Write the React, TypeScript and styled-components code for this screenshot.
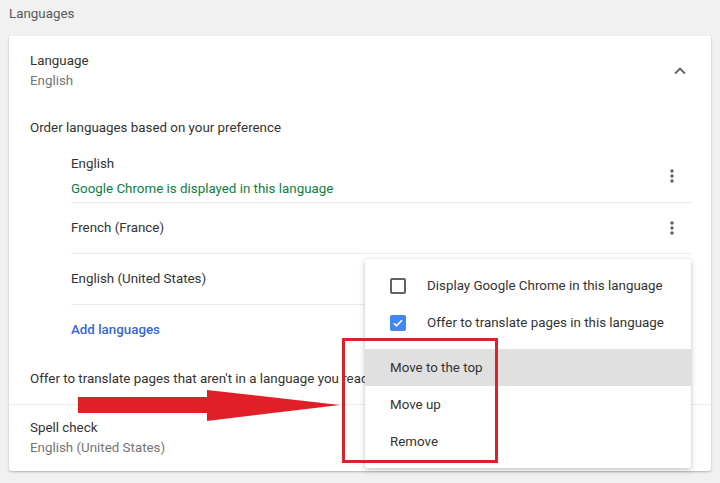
import styled, { createGlobalStyle } from "styled-components";

const TEXT_COLOR = "#333333";
const SECONDARY_TEXT = "#757575";
const SEPARATOR = "#e9e9e9";
const ICON_COLOR = "#616161";
const ANNOTATION_RED = "#e01f26";

const GlobalStyle = createGlobalStyle`
  body {
    margin: 0;
    background: #f1f1f1;
    font-family: Roboto, "Liberation Sans", Arial, sans-serif;
    font-size: 13.35px;
    color: ${TEXT_COLOR};
  }
`;

const languages = [
  { name: "English", note: "Google Chrome is displayed in this language" },
  { name: "French (France)" },
  { name: "English (United States)", menuOpen: true },
];

const ChevronUp = () => (
  <svg width="22" height="22" viewBox="0 0 24 24" fill={ICON_COLOR}>
    <path d="M7.41 15.41L12 10.83l4.59 4.58L18 14l-6-6-6 6z" />
  </svg>
);

const MoreVert = () => (
  <svg width="20" height="20" viewBox="0 0 24 24" fill={ICON_COLOR}>
    <path d="M12 8c1.1 0 2-.9 2-2s-.9-2-2-2-2 .9-2 2 .9 2 2 2zm0 2c-1.1 0-2 .9-2 2s.9 2 2 2 2-.9 2-2-.9-2-2-2zm0 6c-1.1 0-2 .9-2 2s.9 2 2 2 2-.9 2-2-.9-2-2-2z" />
  </svg>
);

const CheckMark = () => (
  <svg width="12" height="12" viewBox="0 0 24 24">
    <path d="M4 12.5l5 5L20 6.5" fill="none" stroke="#fff" strokeWidth="3.4" />
  </svg>
);

const Arrow = () => (
  <ArrowSvg width="264" height="33" viewBox="0 0 264 33">
    <polygon
      points="0,8 129,8 129,1 262,16 129,32 129,24 0,24"
      fill={ANNOTATION_RED}
    />
  </ArrowSvg>
);

export default function App() {
  return (
    <>
      <GlobalStyle />
      <Page>
        <SectionTitle>Languages</SectionTitle>
        <Card>
          <HeaderRow>
            <TwoLine>
              <span>Language</span>
              <Secondary>English</Secondary>
            </TwoLine>
            <IconButton>
              <ChevronUp />
            </IconButton>
          </HeaderRow>

          <SubHeading>Order languages based on your preference</SubHeading>

          <LanguageList>
            {languages.map((lang) => (
              <LanguageItem key={lang.name} $tall={!!lang.note}>
                <TwoLine>
                  <ItemName $tall={!!lang.note}>{lang.name}</ItemName>
                  {lang.note && <Note>{lang.note}</Note>}
                </TwoLine>
                {!lang.menuOpen && (
                  <KebabButton>
                    <MoreVert />
                  </KebabButton>
                )}
              </LanguageItem>
            ))}
            <AddLink>Add languages</AddLink>
          </LanguageList>

          <SettingRow>
            Offer to translate pages that aren't in a language you read
          </SettingRow>

          <SpellRow>
            <TwoLine>
              <span>Spell check</span>
              <Secondary>English (United States)</Secondary>
            </TwoLine>
          </SpellRow>
        </Card>

        <Menu>
          <CheckItem>
            <Checkbox $checked={false} />
            Display Google Chrome in this language
          </CheckItem>
          <CheckItem>
            <Checkbox $checked>
              <CheckMark />
            </Checkbox>
            Offer to translate pages in this language
          </CheckItem>
          <MenuGap />
          <MenuItem $active>Move to the top</MenuItem>
          <MenuItem>Move up</MenuItem>
          <MenuItem>Remove</MenuItem>
        </Menu>

        <Arrow />
        <Highlight />
      </Page>
    </>
  );
}

const Page = styled.div`
  position: relative;
  width: 720px;
  height: 483px;
  padding: 0 9px;
  box-sizing: border-box;
  overflow: hidden;
`;

const SectionTitle = styled.div`
  height: 36px;
  padding-top: 4px;
  box-sizing: border-box;
  line-height: 20px;
  color: #5a5a5a;
`;

const Card = styled.div`
  width: 702px;
  background: #fff;
  border-radius: 2px;
  box-shadow: 0 1px 2px rgba(0, 0, 0, 0.2), 0 1px 3px rgba(0, 0, 0, 0.08);
`;

const TwoLine = styled.div`
  display: flex;
  flex-direction: column;
  line-height: 20px;
`;

const Secondary = styled.span`
  color: ${SECONDARY_TEXT};
`;

const HeaderRow = styled.div`
  height: 68px;
  display: flex;
  align-items: center;
  justify-content: space-between;
  padding: 2px 20px 0 21px;
  box-sizing: border-box;
`;

const IconButton = styled.div`
  width: 22px;
  height: 22px;
  display: flex;
  align-items: center;
  justify-content: center;
`;

const SubHeading = styled.div`
  height: 46px;
  display: flex;
  align-items: center;
  padding-left: 21px;
`;

const LanguageList = styled.div`
  margin: 0 20px 0 62px;
`;

const LanguageItem = styled.div<{ $tall: boolean }>`
  height: ${(p) => (p.$tall ? 52 : 50)}px;
  display: flex;
  align-items: center;
  justify-content: space-between;
  border-bottom: 1px solid ${SEPARATOR};
`;

const ItemName = styled.span<{ $tall: boolean }>`
  line-height: ${(p) => (p.$tall ? 25 : 20)}px;
`;

const Note = styled.span`
  line-height: 25px;
  color: #0b8043;
`;

const KebabButton = styled.div`
  width: 20px;
  height: 20px;
  margin-right: 9px;
  display: flex;
  align-items: center;
  justify-content: center;
`;

const AddLink = styled.div`
  height: 48px;
  display: flex;
  align-items: center;
  color: #3367d6;
  font-weight: 500;
`;

const SettingRow = styled.div`
  height: 51px;
  display: flex;
  align-items: center;
  padding-left: 21px;
  border-bottom: 1px solid ${SEPARATOR};
`;

const SpellRow = styled.div`
  height: 66px;
  display: flex;
  align-items: center;
  padding-left: 21px;
`;

const Menu = styled.div`
  position: absolute;
  left: 365px;
  top: 259px;
  width: 326px;
  height: 209px;
  padding: 8px 0;
  box-sizing: border-box;
  background: #fff;
  border-radius: 2px;
  box-shadow: 0 2px 6px rgba(0, 0, 0, 0.22), 0 0 2px rgba(0, 0, 0, 0.1);
  display: flex;
  flex-direction: column;
`;

const CheckItem = styled.div`
  height: 37px;
  display: flex;
  align-items: center;
  gap: 21px;
  padding-left: 25px;
`;

const Checkbox = styled.div<{ $checked: boolean }>`
  width: 16px;
  height: 16px;
  box-sizing: border-box;
  border-radius: 2px;
  display: flex;
  align-items: center;
  justify-content: center;
  background: ${(p) => (p.$checked ? "#4285f4" : "transparent")};
  border: ${(p) => (p.$checked ? "none" : "2px solid #5f6368")};
`;

const MenuGap = styled.div`
  height: 8px;
`;

const MenuItem = styled.div<{ $active?: boolean }>`
  height: 37px;
  display: flex;
  align-items: center;
  padding-left: 25px;
  background: ${(p) => (p.$active ? "#e0e0e0" : "transparent")};
`;

const ArrowSvg = styled.svg`
  position: absolute;
  left: 78px;
  top: 389px;
`;

const Highlight = styled.div`
  position: absolute;
  left: 342px;
  top: 338px;
  width: 156px;
  height: 125px;
  box-sizing: border-box;
  border: 3px solid #d8232a;
`;
